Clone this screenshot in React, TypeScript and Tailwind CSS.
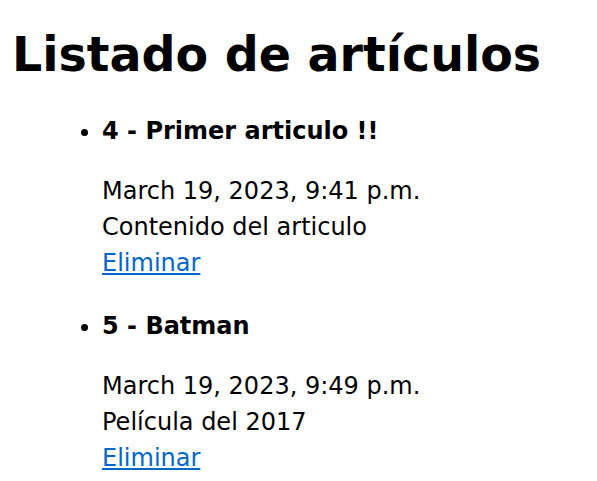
export default function App() {
  const articles = [
    { id: 4, title: "Primer articulo !!", date: "March 19, 2023, 9:41 p.m.", body: "Contenido del articulo" },
    { id: 5, title: "Batman", date: "March 19, 2023, 9:49 p.m.", body: "Película del 2017" },
  ];
  return (
    <div className="min-h-screen bg-white px-[12px] font-['DejaVu_Sans',sans-serif] text-[24px] leading-[36px] text-black">
      <h1 className="pt-[19px] text-[47.5px] font-bold leading-[72px]">Listado de artículos</h1>
      <ul className="mt-[22px] list-disc pl-[90px]">
        {articles.map((a, i) => (
          <li key={a.id} className={i > 0 ? "mt-[27px]" : ""}>
            <div className="font-bold">
              {a.id} - {a.title}
            </div>
            <p className="mt-[24px]">
              {a.date}
              <br />
              {a.body}
              <br />
              <a href="#" className="text-[#0066cc] underline">
                Eliminar
              </a>
            </p>
          </li>
        ))}
      </ul>
    </div>
  );
}
